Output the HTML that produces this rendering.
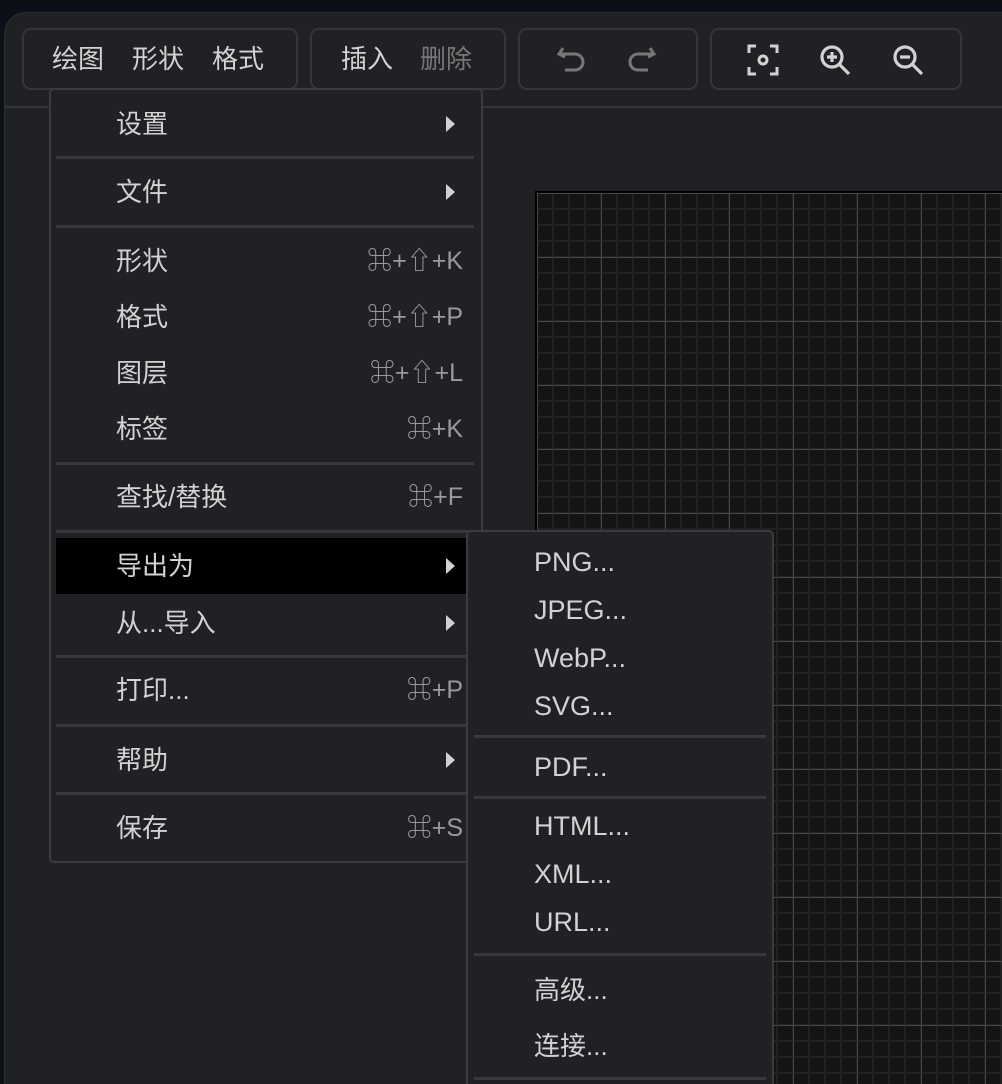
<!DOCTYPE html><html style="width:1002px;height:1084px;overflow:hidden"><head><meta charset="utf-8"><style>
*{margin:0;padding:0;box-sizing:border-box}
body{width:1002px;height:1084px;overflow:hidden;background:#0b0f17;font-family:"Liberation Sans","Noto Sans CJK SC",sans-serif;position:relative}
.win{position:absolute;left:4px;top:12px;width:1000px;height:1072px;background:#202124;border-radius:22px 0 0 0;border-top:1px solid #2c2d30;border-left:1px solid #2c2d30}
.hl{position:absolute;left:5px;top:106px;width:997px;height:2px;background:#34353a}
.grp{position:absolute;top:28px;height:62px;border:2px solid #35363a;border-radius:9px}
.t{position:absolute;font-size:26px;color:#d2d2d2;line-height:30px;white-space:nowrap}
.l{font-size:27px}
.canvas{position:absolute;left:535px;top:191px;width:467px;height:893px;border-left:2px solid #000;border-top:2px solid #000;
background-color:#141414;
background-image:linear-gradient(#474747 1px,transparent 1px),linear-gradient(90deg,#474747 1px,transparent 1px),linear-gradient(#212121 2px,transparent 2px),linear-gradient(90deg,#212121 2px,transparent 2px);
background-size:64px 64px,64px 64px,16px 16px,16px 16px;background-position:0 0,0 0,-1px -1px,-1px -1px}
.menu{position:absolute;background:#202124;border:2px solid #3a3b3e;border-radius:5px}
.sep{position:absolute;height:3px;background:#38393c}
.sc{position:absolute;font-size:25px;color:#9a9a9a;line-height:30px;right:539px;white-space:nowrap}
.arr{position:absolute;width:0;height:0;border-top:8px solid transparent;border-bottom:8px solid transparent;border-left:9px solid #d2d2d2}
</style></head><body>
<div class="win"></div>
<div class="hl"></div>
<div class="canvas"></div>
<div class="grp" style="left:22px;width:276px"></div>
<div class="grp" style="left:310px;width:196px"></div>
<div class="grp" style="left:518px;width:180px"></div>
<div class="grp" style="left:710px;width:252px"></div>
<div class="t" style="left:52px;top:44px">绘图</div>
<div class="t" style="left:132px;top:44px">形状</div>
<div class="t" style="left:212px;top:44px">格式</div>
<div class="t" style="left:341px;top:44px">插入</div>
<div class="t" style="left:420px;top:44px;color:#777">删除</div>
<svg style="position:absolute;left:555px;top:42px" width="36" height="36" viewBox="0 0 36 36" fill="none" stroke="#777" stroke-width="3"><path d="M8 6 L4 12 L10 15"/><path d="M5 12 H20 a8 8 0 0 1 0 16 H10"/></svg>
<svg style="position:absolute;left:624px;top:42px" width="36" height="36" viewBox="0 0 36 36" fill="none" stroke="#777" stroke-width="3"><path d="M26 6 L30 12 L24 15"/><path d="M29 12 H14 a8 8 0 0 0 0 16 H24"/></svg>
<svg style="position:absolute;left:745px;top:42px" width="36" height="36" viewBox="0 0 36 36" fill="none" stroke="#d2d2d2" stroke-width="3"><path d="M4 11 V4 H11 M25 4 H32 V11 M32 25 V32 H25 M11 32 H4 V25"/><circle cx="18" cy="18" r="4"/></svg>
<svg style="position:absolute;left:817px;top:42px" width="36" height="36" viewBox="0 0 36 36" fill="none" stroke="#d2d2d2" stroke-width="3.2"><circle cx="15" cy="15" r="10"/><path d="M22 22 L32 32 M15 10 V20 M10 15 H20"/></svg>
<svg style="position:absolute;left:890px;top:42px" width="36" height="36" viewBox="0 0 36 36" fill="none" stroke="#d2d2d2" stroke-width="3.2"><circle cx="15" cy="15" r="10"/><path d="M22 22 L32 32 M10 15 H20"/></svg>

<div class="menu" style="left:49px;top:88px;width:434px;height:775px"></div>
<div style="position:absolute;left:56px;top:538px;width:412px;height:56px;background:#000"></div>
<div class="sep" style="left:56px;top:156px;width:418px"></div>
<div class="sep" style="left:56px;top:225px;width:418px"></div>
<div class="sep" style="left:56px;top:462px;width:418px"></div>
<div class="sep" style="left:56px;top:530px;width:418px"></div>
<div class="sep" style="left:56px;top:655px;width:418px"></div>
<div class="sep" style="left:56px;top:724px;width:418px"></div>
<div class="sep" style="left:56px;top:792px;width:418px"></div>
<div class="t" style="left:116px;top:109px">设置</div><div class="arr" style="left:446px;top:116px"></div>
<div class="t" style="left:116px;top:177px">文件</div><div class="arr" style="left:446px;top:184px"></div>
<div class="t" style="left:116px;top:246px">形状</div><div class="sc" style="top:246px">⌘+⇧+K</div>
<div class="t" style="left:116px;top:302px">格式</div><div class="sc" style="top:302px">⌘+⇧+P</div>
<div class="t" style="left:116px;top:358px">图层</div><div class="sc" style="top:358px">⌘+⇧+L</div>
<div class="t" style="left:116px;top:414px">标签</div><div class="sc" style="top:414px">⌘+K</div>
<div class="t" style="left:116px;top:482px">查找/替换</div><div class="sc" style="top:482px">⌘+F</div>
<div class="t" style="left:116px;top:551px">导出为</div><div class="arr" style="left:446px;top:558px"></div>
<div class="t" style="left:116px;top:608px">从...导入</div><div class="arr" style="left:446px;top:615px"></div>
<div class="t" style="left:116px;top:675px">打印...</div><div class="sc" style="top:675px">⌘+P</div>
<div class="t" style="left:116px;top:745px">帮助</div><div class="arr" style="left:446px;top:752px"></div>
<div class="t" style="left:116px;top:813px">保存</div><div class="sc" style="top:813px">⌘+S</div>

<div class="menu" style="left:466px;top:530px;width:308px;height:570px"></div>
<div class="sep" style="left:474px;top:735px;width:292px"></div>
<div class="sep" style="left:474px;top:796px;width:292px"></div>
<div class="sep" style="left:474px;top:953px;width:292px"></div>
<div class="sep" style="left:474px;top:1077px;width:292px"></div>
<div class="t l" style="left:534px;top:547px">PNG...</div>
<div class="t l" style="left:534px;top:595px">JPEG...</div>
<div class="t l" style="left:534px;top:643px">WebP...</div>
<div class="t l" style="left:534px;top:691px">SVG...</div>
<div class="t l" style="left:534px;top:752px">PDF...</div>
<div class="t l" style="left:534px;top:811px">HTML...</div>
<div class="t l" style="left:534px;top:859px">XML...</div>
<div class="t l" style="left:534px;top:907px">URL...</div>
<div class="t" style="left:534px;top:975px">高级...</div>
<div class="t" style="left:534px;top:1031px">连接...</div>
</body></html>
